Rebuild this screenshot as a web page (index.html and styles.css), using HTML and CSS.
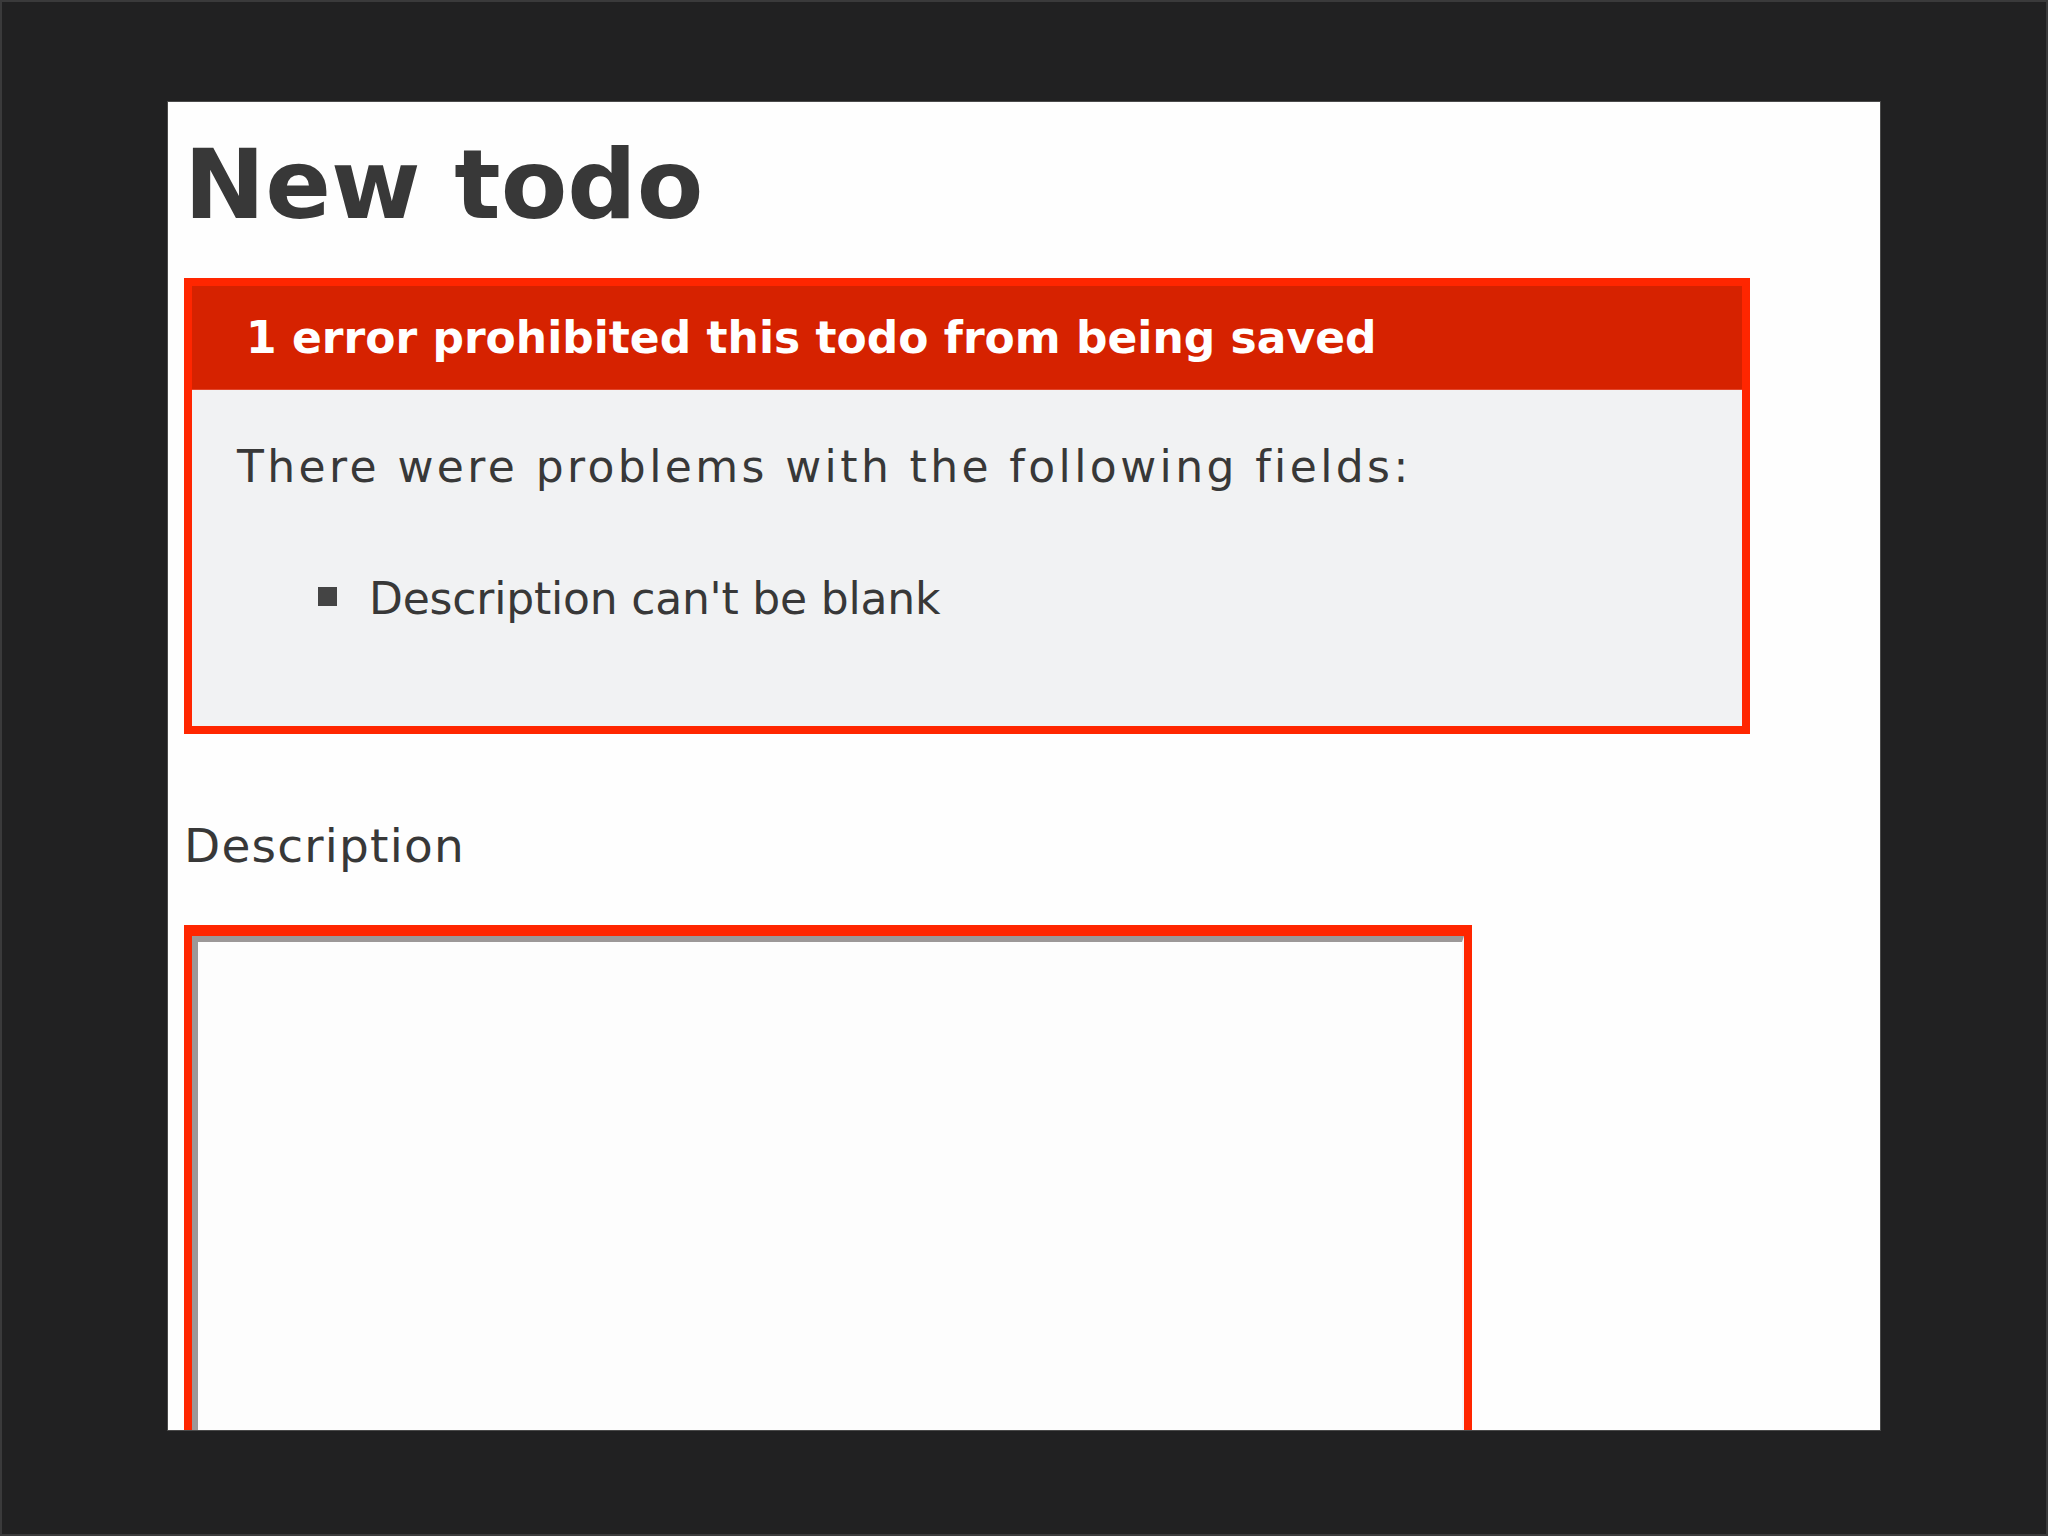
FILE: index.html
```html
<!DOCTYPE html>
<html lang="en">
<head>
  <meta charset="UTF-8" />
  <title>New todo</title>
  <link rel="stylesheet" href="styles.css">
</head>
<body>

<div class="screen">
    <div class="page">
        <h1 class="page-title">New todo</h1>

        <!-- error explanation -->
        <div class="error-box">
            <h2 class="error-title">1 error prohibited this todo from being saved</h2>
            <div class="error-body">
                <p class="error-text">There were problems with the following fields:</p>
                <ul class="error-list">
                    <li>Description can't be blank</li>
                </ul>
            </div>
        </div>

        <form class="todo-form">
            <label class="field-label" for="description">Description</label>
            <div class="field-with-errors">
                <textarea id="description" class="field-input"></textarea>
            </div>
        </form>
    </div>
</div>

</body>
</html>
```

FILE: styles.css
```css
/* base */
html, body {
    margin: 0;
    padding: 0;
}
body {
    background: #212122;
    font-family: "DejaVu Sans", Verdana, sans-serif;
    color: #383838;
}
.screen {
    width: 2048px;
    height: 1536px;
    box-sizing: border-box;
    padding: 102px 168px 106px 168px;
    box-shadow: inset 0 0 0 2px #3a3a3b;
}
.page {
    height: 100%;
    box-sizing: border-box;
    padding: 27px 0 0 16px;
    background: #fefefe;
    overflow: hidden;
    box-shadow: 0 0 0 1px #4a4a4a;
}

/* heading */
.page-title {
    margin: 0;
    font-size: 97px;
    line-height: 112px;
    font-weight: bold;
    color: #383838;
}

/* error explanation box */
.error-box {
    width: 1566px;
    box-sizing: border-box;
    margin-top: 37px;
    border: 8px solid #ff2600;
    background: #f1f2f3;
}
.error-title {
    margin: 0;
    height: 104px;
    box-sizing: border-box;
    padding: 22px 0 0 54px;
    font-size: 44px;
    line-height: 60px;
    font-weight: bold;
    color: #fff;
    background: #d62200;
    border-bottom: 1px solid #e2462c;
}
.error-body {
    padding: 49px 0 99px 45px;
}
.error-text {
    margin: 0;
    font-size: 44px;
    line-height: 56px;
    letter-spacing: 3.4px;
    color: #383838;
}
.error-list {
    list-style: none;
    margin: 76px 0 0 0;
    padding: 0 0 0 81px;
}
.error-list li {
    display: flex;
    gap: 32px;
    font-size: 44px;
    line-height: 56px;
    letter-spacing: -0.2px;
    color: #383838;
}
.error-list li:before {
    content: "";
    flex: none;
    width: 19px;
    height: 19px;
    margin-top: 16px;
    background: #444;
}

/* form */
.todo-form {
    margin-top: 84px;
}
.field-label {
    display: block;
    font-size: 47px;
    line-height: 56px;
    letter-spacing: 1.2px;
    color: #383838;
}
.field-with-errors {
    width: 1288px;
    box-sizing: border-box;
    margin-top: 51px;
    padding: 11px 8px 0 8px;
    background: #ff2600;
}
.field-input {
    display: block;
    width: 100%;
    height: 700px;
    box-sizing: border-box;
    margin: 0;
    border-style: solid;
    border-width: 6px 2px 2px 6px;
    border-color: #9c9898 #f6f6f6 #f6f6f6 #9c9898;
    background: #fdfdfd;
    resize: none;
    outline: none;
}
```
